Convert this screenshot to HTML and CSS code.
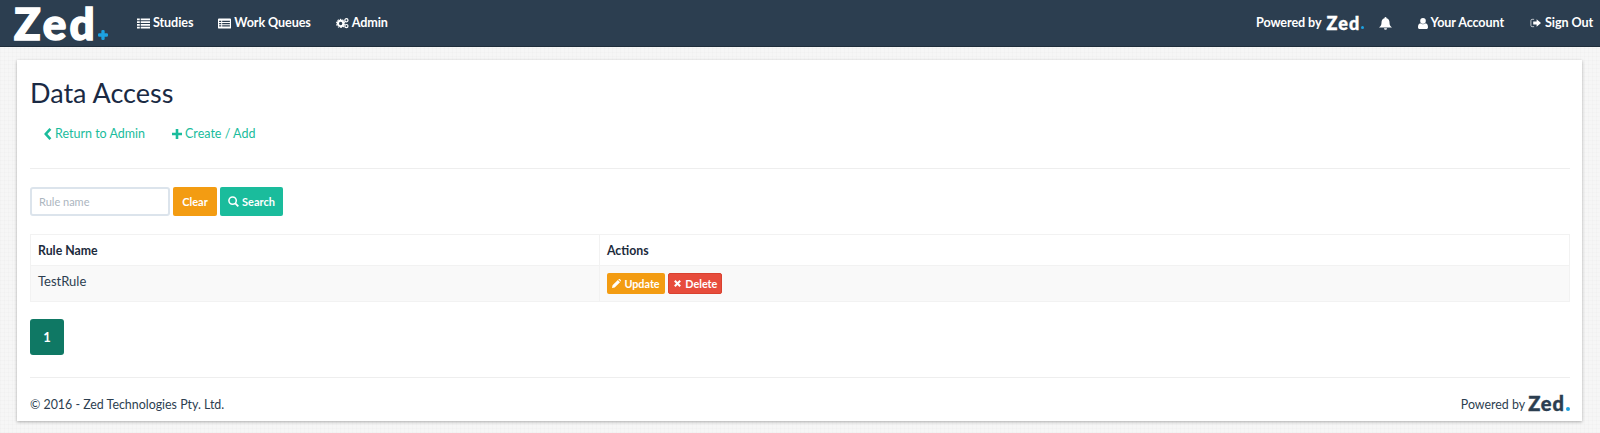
FILE: index.html
```html
<!DOCTYPE html>
<html lang="en">
<head>
<meta charset="utf-8">
<title>Data Access</title>
<link rel="stylesheet" href="styles.css">
</head>
<body>
<nav class="nav">
  <a class="logo"><span class="logo-text">Zed</span><svg class="logo-plus" viewBox="0 0 12 12"><path d="M4 1.5a1.5 1.5 0 0 1 1.5-1.5h1A1.5 1.5 0 0 1 8 1.500V4h2.500A1.500 1.500 0 0 1 12 5.500v1A1.500 1.500 0 0 1 10.500 8H8v2.500A1.500 1.500 0 0 1 6.500 12h-1A1.500 1.500 0 0 1 4 10.500V8H1.500A1.500 1.500 0 0 1 0 6.500v-1A1.500 1.500 0 0 1 1.500 4H4z"/></svg></a>
  <ul class="nav-list">
    <li class="nav-item"><svg class="ic ic-list" viewBox="0 0 14 11"><path d="M0 0h3v2H0zM4 0h10v2H4zM0 3h3v2H0zM4 3h10v2H4zM0 6h3v2H0zM4 6h10v2H4zM0 9h3v2H0zM4 9h10v2H4z"/></svg>Studies</li>
    <li class="nav-item"><svg class="ic ic-list" viewBox="0 0 14 11"><path fill-rule="evenodd" d="M1 0h12a1 1 0 0 1 1 1v9a1 1 0 0 1-1 1H1a1 1 0 0 1-1-1V1a1 1 0 0 1 1-1zM1.200 2.500v1.300h2.300V2.500zM4.500 2.500v1.300h8.300V2.500zM1.200 4.900v1.300h2.300V4.900zM4.500 4.900v1.300h8.300V4.900zM1.200 7.300v1.300h2.300V7.300zM4.500 7.300v1.300h8.300V7.300z"/></svg>Work Queues</li>
    <li class="nav-item"><svg class="ic ic-gears" viewBox="0 0 14 12"><circle cx="5" cy="6.500" r="2.900" fill="none" stroke="currentColor" stroke-width="2.200"/><circle cx="5" cy="6.500" r="4.400" fill="none" stroke="currentColor" stroke-width="1.100" stroke-dasharray="1.600 1.160"/><circle cx="11.200" cy="3" r="1.700" fill="none" stroke="currentColor" stroke-width="1.300"/><circle cx="11.200" cy="9.300" r="1.700" fill="none" stroke="currentColor" stroke-width="1.300"/></svg>Admin</li>
  </ul>
  <ul class="nav-list nav-right">
    <li class="nav-item powered"><span>Powered by</span><span class="mini-zed">Zed</span><i class="mini-dot"></i></li>
    <li class="nav-item bell"><svg class="ic ic-bell" viewBox="0 0 13 13"><path d="M6.500 0a1 1 0 0 1 1 1v.300C9.500 1.800 10.500 3.400 10.500 5.500c0 2.700.8 3.800 2.500 5H0c1.700-1.200 2.500-2.300 2.500-5 0-2.100 1-3.700 3-4.200V1a1 1 0 0 1 1-1zM5 11.300h3A1.500 1.500 0 0 1 5 11.300z"/></svg></li>
    <li class="nav-item account"><svg class="ic ic-user" viewBox="0 0 10 11"><circle cx="5" cy="2.900" r="2.800"/><path d="M2.300 5.300C3 6 4 6.300 5 6.300s2-.3 2.700-1C9.200 5.500 10 7 10 9.200c0 1-.7 1.800-1.700 1.800H1.700C.7 11 0 10.200 0 9.200 0 7 .8 5.500 2.300 5.300z"/></svg>Your Account</li>
    <li class="nav-item"><svg class="ic ic-signout" viewBox="0 0 12 10"><path d="M4.500 1H2.300C1.500 1 1 1.500 1 2.300v5.400C1 8.500 1.500 9 2.300 9h2.200" fill="none" stroke="currentColor" stroke-width="1" opacity=".75"/><path d="M7.200 1L12 5 7.200 9V6.700H3.500V3.300h3.700z"/></svg>Sign Out</li>
  </ul>
</nav>

<main class="card">
  <h1 class="title">Data Access</h1>
  <div class="links">
    <a class="link"><svg class="ic ic-chev" viewBox="0 0 8 12"><path d="M6.400 .9 1.800 6l4.600 5.100" fill="none" stroke="currentColor" stroke-width="2.600"/></svg>Return to Admin</a>
    <a class="link"><svg class="ic ic-plus" viewBox="0 0 10 10"><path d="M3.700 0h2.600v3.700H10v2.600H6.300V10H3.700V6.300H0V3.700h3.700z"/></svg>Create / Add</a>
  </div>
  <hr class="rule rule-top">
  <form class="search">
    <input class="input" type="text" placeholder="Rule name">
    <span class="btn btn-orange btn-clear">Clear</span>
    <span class="btn btn-teal"><svg class="ic ic-search" viewBox="0 0 11 11"><circle cx="4.600" cy="4.600" r="3.700" fill="none" stroke="currentColor" stroke-width="1.500"/><path d="M7.300 7.300 10.300 10.300" stroke="currentColor" stroke-width="1.800"/></svg>Search</span>
  </form>
  <table class="table">
    <thead>
      <tr><th class="col-name">Rule Name</th><th>Actions</th></tr>
    </thead>
    <tbody>
      <tr>
        <td class="cell-name">TestRule</td>
        <td class="cell-actions">
          <span class="btn btn-sm btn-orange"><svg class="ic ic-small" viewBox="0 0 10 10"><path d="M0 10l.6-3L6.500 1.100 8.900 3.500 3 9.400zM7.200.4c.5-.5 1.200-.5 1.700 0l.7.700c.5.500.5 1.200 0 1.700L9.500 2.900 7.100.5z"/></svg>Update</span>
          <span class="btn btn-sm btn-red"><svg class="ic ic-small" viewBox="0 0 10 10"><path d="M2 2 8 8M8 2 2 8" stroke="currentColor" stroke-width="2.300" fill="none"/></svg>Delete</span>
        </td>
      </tr>
    </tbody>
  </table>
  <div class="pager"><span class="page">1</span></div>
  <hr class="rule rule-bottom">
  <footer class="footer">
    <span>© 2016 - Zed Technologies Pty. Ltd.</span>
    <span class="foot-power"><span>Powered by</span><span class="foot-zed">Zed</span><i class="foot-dot"></i></span>
  </footer>
</main>
</body>
</html>
```
FILE: styles.css
```css
* { box-sizing: border-box; }
html, body { margin: 0; padding: 0; }
body {
  height: 433px;
  overflow: hidden;
  font-family: "Lato", "Liberation Sans", sans-serif;
  font-size: 13px;
  color: #2c3e50;
  background-color: #f6f6f6;
  background-image:
    repeating-linear-gradient(0deg, rgba(0,0,0,.012) 0 1px, transparent 1px 4px),
    repeating-linear-gradient(90deg, rgba(0,0,0,.012) 0 1px, transparent 1px 4px);
}
.nav {
  display: flex;
  align-items: center;
  height: 47px;
  padding: 0 7px 0 14px;
  background: #2c3e50;
  border-bottom: 1px solid #1f2d3b;
  color: #fff;
}
.logo { display: flex; width: 94px; height: 46px; position: relative; }
.logo-text {
  font-family: "Lato", sans-serif;
  font-weight: 900;
  font-size: 44px;
  line-height: 46px;
  letter-spacing: 3px;
  -webkit-text-stroke: 1.500px #fff;
}
.logo-plus { position: absolute; left: 84px; top: 30px; width: 10px; height: 10px; fill: #1da1e0; }
.nav-list { display: flex; align-items: center; list-style: none; margin: 0; padding: 0 0 0 29px; gap: 25px; }
.nav-right { margin-left: auto; padding: 0; gap: 26px; }
.nav-item { display: flex; align-items: center; font-weight: 700; font-size: 12.6px; line-height: 46px; letter-spacing: -.1px; }
.ic { display: block; fill: currentColor; flex: none; }
.ic-list { width: 13px; height: 11px; margin-right: 3px; }
.ic-gears { width: 13px; height: 12px; margin-right: 3px; }
.ic-bell { width: 13px; height: 13px; }
.ic-user { width: 10px; height: 11px; margin-right: 3px; }
.ic-signout { width: 11px; height: 10px; margin-right: 4px; }
.mini-zed { font-weight: 900; font-size: 18px; letter-spacing: 1.200px; margin-left: 5px; -webkit-text-stroke: .4px #fff; }
.mini-dot { width: 3px; height: 3px; border-radius: 50%; background: #1da1e0; align-self: center; margin: 9px 0 0 0; }
.bell { margin-left: -11px; }
.card {
  margin: 13px 18px 0 17px;
  height: 361px;
  padding: 0 12px 0 13px;
  background: #fff;
  box-shadow: 0 1px 3px rgba(0,0,0,.3);
}
.title { margin: 0; padding: 16px 0 0; font-weight: 400; font-size: 27px; line-height: 34px; color: #1a2a44; }
.links { display: flex; gap: 27px; padding: 15px 0 0 14px; }
.link { display: flex; align-items: center; color: #1abc9c; font-size: 12.500px; line-height: 18px; }
.ic-chev { width: 8px; height: 12px; margin-right: 3px; }
.ic-plus { width: 10px; height: 10px; margin-right: 3px; }
.rule { border: 0; border-top: 1px solid #eee; margin: 0; }
.rule-top { margin-top: 25px; }
.search { display: flex; gap: 3px; margin-top: 18px; }
.input {
  width: 140px;
  height: 29px;
  padding: 0 7px;
  border: 2px solid #dce4ec;
  border-radius: 3px;
  font-family: inherit;
  font-size: 11px;
  font-weight: 400;
  background: #fff;
  outline: 0;
}
.input::placeholder { color: #acb6c0; opacity: 1; }
.btn {
  display: inline-flex;
  align-items: center;
  justify-content: center;
  color: #fff;
  font-size: 11px;
  font-weight: 700;
  border-radius: 2px;
}
.search .btn { height: 29px; }
.btn-clear { width: 44px; }
.btn-teal { width: 63px; background: #1abc9c; }
.btn-orange { background: #f39c12; }
.btn-red { background: #e74c3c; border: 1px solid #d9412f; }
.ic-search { width: 11px; height: 11px; margin-right: 3px; }
.table {
  width: 100%;
  margin-top: 18px;
  border-collapse: collapse;
  table-layout: fixed;
  font-size: 13px;
}
.table th, .table td { text-align: left; padding: 0 7px; border: 1px solid #f2f2f2; }
.table th { height: 31px; font-weight: 700; font-size: 12.300px; color: #1c2b3c; }
.table td { height: 36px; background: #f9f9f9; color: #2c3e50; }
.table .cell-name { padding-bottom: 5px; }
.col-name { width: 569px; }
.cell-actions { white-space: nowrap; }
.btn-sm { height: 21px; vertical-align: middle; font-size: 10.800px; }
.btn-sm.btn-orange { width: 58px; }
.btn-sm.btn-red { width: 54px; }
.ic-small { width: 9px; height: 9px; margin-right: 3px; }
.pager { padding-top: 17px; }
.page {
  display: flex;
  align-items: center;
  justify-content: center;
  width: 34px;
  height: 36px;
  background: #0f7864;
  color: #fff;
  font-weight: 700;
  font-size: 13px;
  border-radius: 3px;
}
.rule-bottom { margin-top: 22px; }
.footer { display: flex; justify-content: space-between; align-items: center; height: 52px; font-size: 12.400px; color: #2c3e50; }
.foot-power { display: flex; align-items: center; }
.foot-zed { font-weight: 900; font-size: 20px; letter-spacing: 1px; margin-left: 3px; color: #2c3e50; -webkit-text-stroke: .4px #2c3e50; line-height: 20px; margin-top: -2px; }
.foot-dot { width: 4px; height: 4px; border-radius: 50%; background: #1da1e0; margin: 9px 0 0 1px; }
```
